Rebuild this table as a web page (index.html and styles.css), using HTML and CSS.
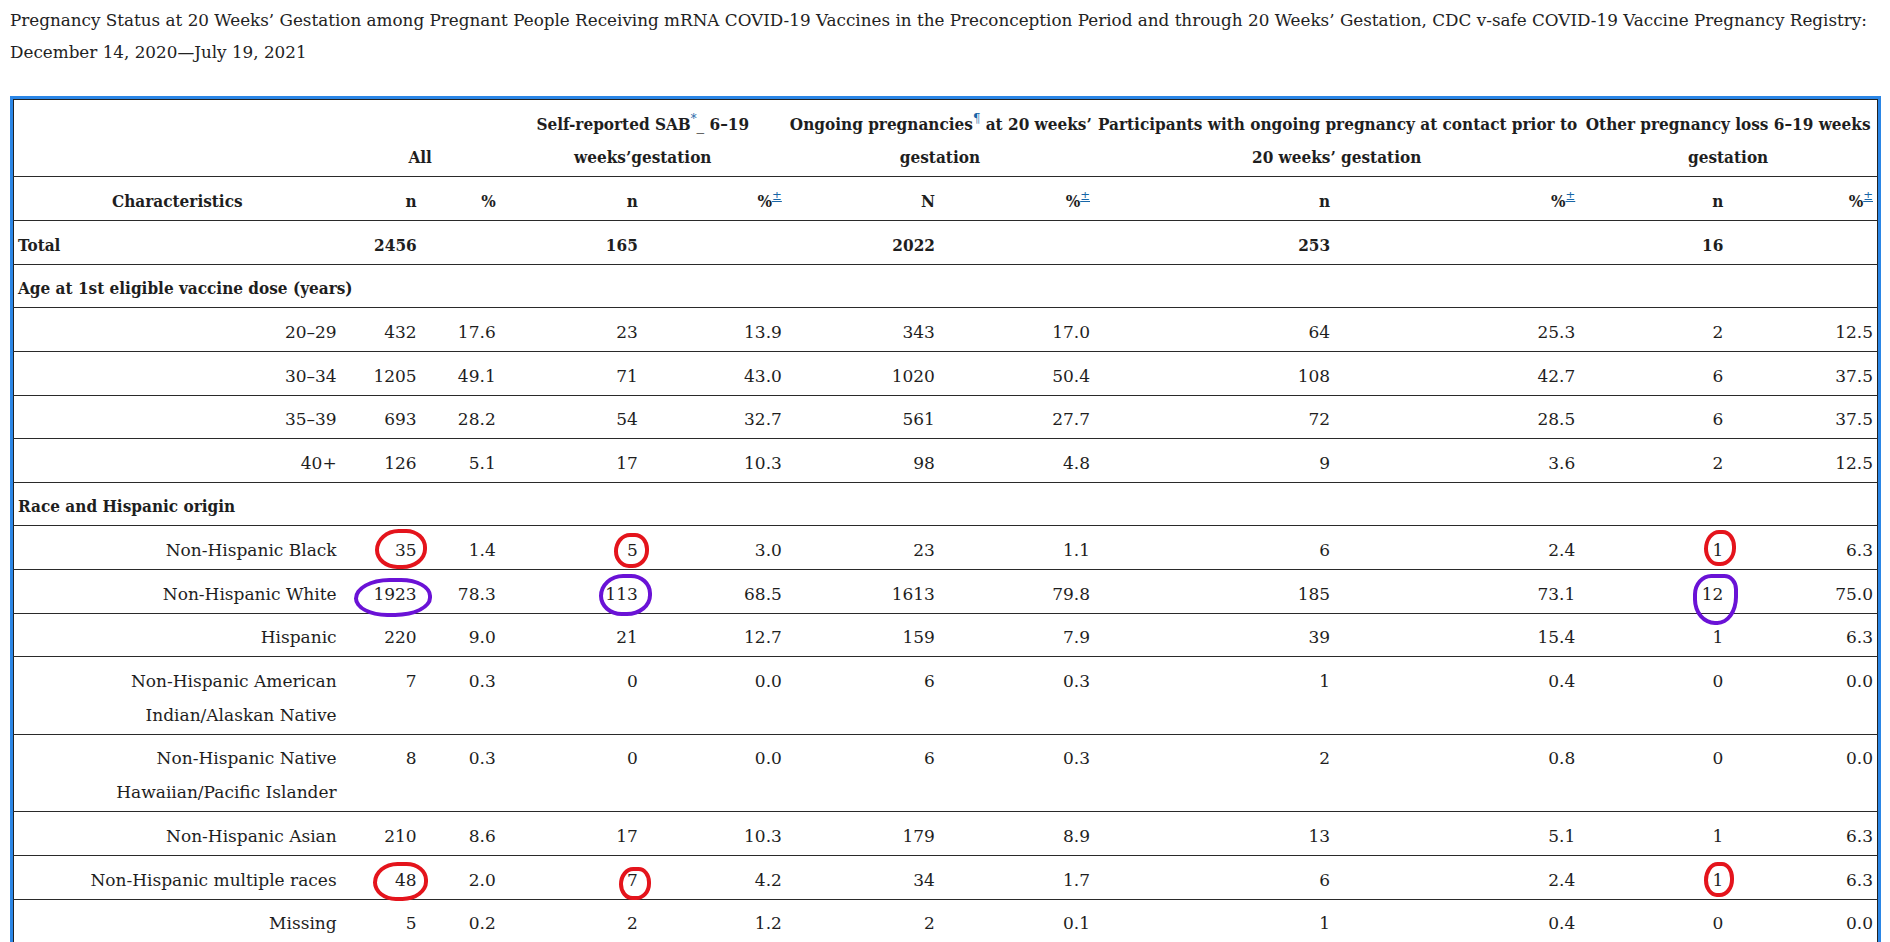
FILE: index.html
```html
<!DOCTYPE html>
<html lang="en">
<head>
<meta charset="utf-8">
<title>Pregnancy Status at 20 Weeks’ Gestation</title>
<link rel="stylesheet" href="styles.css">
</head>
<body>
<p class="caption">Pregnancy Status at 20 Weeks’ Gestation among Pregnant People Receiving mRNA COVID-19 Vaccines in the Preconception Period and through 20 Weeks’ Gestation, CDC v-safe COVID-19 Vaccine Pregnancy Registry:<br>December 14, 2020—July 19, 2021</p>
<div class="frame">
<table class="data">
<colgroup>
<col class="c-char"><col class="c-all-n"><col class="c-all-p"><col class="c-sab-n"><col class="c-sab-p"><col class="c-ong-n"><col class="c-ong-p"><col class="c-par-n"><col class="c-par-p"><col class="c-oth-n"><col class="c-oth-p">
</colgroup>
<thead>
<tr class="grp">
<th></th>
<th colspan="2">All</th>
<th colspan="2">Self-reported SAB<sup><a class="fn">*</a></sup><span class="us">_</span> 6–19<br>weeks’gestation</th>
<th colspan="2">Ongoing pregnancies<sup><a class="fn">¶</a></sup> at 20 weeks’<br>gestation</th>
<th colspan="2">Participants with ongoing pregnancy at contact prior to<br>20 weeks’ gestation</th>
<th colspan="2">Other pregnancy loss 6–19 weeks<br>gestation</th>
</tr>
<tr class="sub">
<th class="lbl-c">Characteristics</th>
<th>n</th><th>%</th>
<th>n</th><th>%<sup><a class="fn u">±</a></sup></th>
<th>N</th><th>%<sup><a class="fn u">±</a></sup></th>
<th>n</th><th>%<sup><a class="fn u">±</a></sup></th>
<th>n</th><th>%<sup><a class="fn u">±</a></sup></th>
</tr>
</thead>
<tbody>
<tr class="total">
<th class="lbl-l">Total</th>
<td>2456</td><td></td><td>165</td><td></td><td>2022</td><td></td><td>253</td><td></td><td>16</td><td></td>
</tr>
<tr class="section"><th class="lbl-l" colspan="11">Age at 1st eligible vaccine dose (years)</th></tr>
<tr><th class="lbl">20–29</th><td>432</td><td>17.6</td><td>23</td><td>13.9</td><td>343</td><td>17.0</td><td>64</td><td>25.3</td><td>2</td><td>12.5</td></tr>
<tr><th class="lbl">30–34</th><td>1205</td><td>49.1</td><td>71</td><td>43.0</td><td>1020</td><td>50.4</td><td>108</td><td>42.7</td><td>6</td><td>37.5</td></tr>
<tr><th class="lbl">35–39</th><td>693</td><td>28.2</td><td>54</td><td>32.7</td><td>561</td><td>27.7</td><td>72</td><td>28.5</td><td>6</td><td>37.5</td></tr>
<tr><th class="lbl">40+</th><td>126</td><td>5.1</td><td>17</td><td>10.3</td><td>98</td><td>4.8</td><td>9</td><td>3.6</td><td>2</td><td>12.5</td></tr>
<tr class="section"><th class="lbl-l" colspan="11">Race and Hispanic origin</th></tr>
<tr><th class="lbl">Non-Hispanic Black</th><td><span class="mark red m35">35</span></td><td>1.4</td><td><span class="mark red m5">5</span></td><td>3.0</td><td>23</td><td>1.1</td><td>6</td><td>2.4</td><td><span class="mark red m1a">1</span></td><td>6.3</td></tr>
<tr><th class="lbl">Non-Hispanic White</th><td><span class="mark purple m1923">1923</span></td><td>78.3</td><td><span class="mark purple m113">113</span></td><td>68.5</td><td>1613</td><td>79.8</td><td>185</td><td>73.1</td><td><span class="mark purple m12">12</span></td><td>75.0</td></tr>
<tr><th class="lbl">Hispanic</th><td>220</td><td>9.0</td><td>21</td><td>12.7</td><td>159</td><td>7.9</td><td>39</td><td>15.4</td><td>1</td><td>6.3</td></tr>
<tr><th class="lbl">Non-Hispanic American<br>Indian/Alaskan Native</th><td>7</td><td>0.3</td><td>0</td><td>0.0</td><td>6</td><td>0.3</td><td>1</td><td>0.4</td><td>0</td><td>0.0</td></tr>
<tr><th class="lbl">Non-Hispanic Native<br>Hawaiian/Pacific Islander</th><td>8</td><td>0.3</td><td>0</td><td>0.0</td><td>6</td><td>0.3</td><td>2</td><td>0.8</td><td>0</td><td>0.0</td></tr>
<tr><th class="lbl">Non-Hispanic Asian</th><td>210</td><td>8.6</td><td>17</td><td>10.3</td><td>179</td><td>8.9</td><td>13</td><td>5.1</td><td>1</td><td>6.3</td></tr>
<tr><th class="lbl">Non-Hispanic multiple races</th><td><span class="mark red m48">48</span></td><td>2.0</td><td><span class="mark red m7">7</span></td><td>4.2</td><td>34</td><td>1.7</td><td>6</td><td>2.4</td><td><span class="mark red m1b">1</span></td><td>6.3</td></tr>
<tr><th class="lbl">Missing</th><td>5</td><td>0.2</td><td>2</td><td>1.2</td><td>2</td><td>0.1</td><td>1</td><td>0.4</td><td>0</td><td>0.0</td></tr>
</tbody>
</table>
</div>
</body>
</html>
```
FILE: styles.css
```css
html, body {
  overflow: hidden;
}
body {
  margin: 0;
  padding: 4px 9px 0 10px;
  background: #ffffff;
  color: #1e1e1e;
  font-family: "DejaVu Serif", "Liberation Serif", serif;
  font-size: 17px;
}
.caption {
  margin: 0;
  font-size: 16.8px;
  line-height: 32px;
  color: #222;
}
.frame {
  margin-top: 28px;
  border: 3px solid #2b86e6;
  border-bottom: 0;
}
.data {
  width: 100%;
  border-collapse: collapse;
  table-layout: fixed;
  border: 1px solid #222;
  line-height: 33.85px;
}
.c-char { width: 327px; }
.c-all-n { width: 80px; }
.c-all-p { width: 79px; }
.c-sab-n { width: 142px; }
.c-sab-p { width: 144px; }
.c-ong-n { width: 153px; }
.c-ong-p { width: 155px; }
.c-par-n { width: 240px; }
.c-par-p { width: 245px; }
.c-oth-n { width: 148px; }
.c-oth-p { width: 150px; }
.data tr {
  border-bottom: 1px solid #2a2a2a;
}
.data th, .data td {
  padding: 7.6px 4px 1.2px;
  text-align: right;
  vertical-align: top;
  white-space: nowrap;
}
.data th {
  font-family: "DejaVu Serif Condensed", "DejaVu Serif", serif;
  font-stretch: condensed;
  font-weight: bold;
}
.data .grp th {
  text-align: center;
  vertical-align: bottom;
}
.data .sub .lbl-c {
  text-align: center;
}
.data .lbl-l {
  text-align: left;
}
.data .lbl {
  font-family: "DejaVu Serif", serif;
  font-stretch: normal;
  font-weight: normal;
}
.data .total td {
  font-family: "DejaVu Serif Condensed", "DejaVu Serif", serif;
  font-stretch: condensed;
  font-weight: bold;
}
sup {
  font-size: 13px;
  line-height: 0;
  vertical-align: 7px;
}
.fn {
  color: #1766a8;
  font-weight: normal;
}
.fn.u {
  text-decoration: underline;
}
.us {
  font-weight: normal;
}
.mark {
  position: relative;
  display: inline-block;
}
.mark::after {
  content: "";
  position: absolute;
  border: 4px solid;
  border-radius: 48% 42% 50% 45% / 55% 48% 52% 50%;
  box-sizing: border-box;
}
.red::after { border-color: #e4141c; }
.purple::after { border-color: #6a12d6; }
.m35::after { left: -20px; right: -10px; top: -5px; bottom: -1px; }
.m5::after { left: -13px; right: -11px; top: -1px; bottom: 0; }
.m1a::after { left: -9px; right: -13px; top: -4px; bottom: 2px; }
.m1923::after { left: -19px; right: -15px; top: 0; bottom: -5px; }
.m113::after { left: -6px; right: -14px; top: -4px; bottom: -4px; }
.m12::after { left: -9px; right: -15px; top: -4px; bottom: -13px; border-radius: 40% 30% 45% 48% / 40% 30% 55% 50%; }
.m48::after { left: -22px; right: -11px; top: -2px; bottom: -4px; }
.m7::after { left: -8px; right: -13px; top: 3px; bottom: -3px; }
.m1b::after { left: -9px; right: -11px; top: -2px; bottom: 0; }
```
